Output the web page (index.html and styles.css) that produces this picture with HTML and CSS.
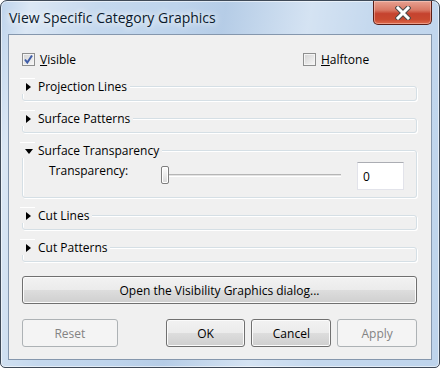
FILE: index.html
```html
<!DOCTYPE html>
<html lang="en">
  <head>
    <meta charset="utf-8" />
    <title>View Specific Category Graphics</title>
    <link rel="stylesheet" href="styles.css">
  </head>

  <body>
    <div class="window">
      <header class="titlebar">
        <span class="title">View Specific Category Graphics</span>
        <button class="close" title="Close">
          <svg width="16" height="14" viewBox="0 0 16 14" aria-hidden="true">
            <path d="M3 2 L13 12 M13 2 L3 12" stroke="#4a4a4a" stroke-width="5" stroke-linecap="square" fill="none" />
            <path d="M3 2 L13 12 M13 2 L3 12" stroke="#fff" stroke-width="3" stroke-linecap="square" fill="none" />
          </svg>
        </button>
      </header>

      <main class="client">
        <div class="checks">
          <label class="check first">
            <span class="box">
              <svg width="11" height="11" viewBox="0 0 11 11" aria-hidden="true">
                <path d="M2 5.5 L4.3 8.5 L9 1.5" stroke="#3f5da8" stroke-width="2" fill="none" />
              </svg>
            </span>
            <span><u>V</u>isible</span>
          </label>
          <label class="check">
            <span class="box"></span>
            <span><u>H</u>alftone</span>
          </label>
        </div>

        <section class="group">
          <div class="group-head"><span class="toggle"><span class="arrow"></span></span>Projection Lines</div>
        </section>

        <section class="group">
          <div class="group-head"><span class="toggle"><span class="arrow"></span></span>Surface Patterns</div>
        </section>

        <section class="group open">
          <div class="group-head"><span class="toggle"><span class="arrow down"></span></span>Surface Transparency</div>
          <div class="group-body">
            <span class="field-label">Transparency:</span>
            <div class="slider">
              <span class="track"></span>
              <span class="thumb"></span>
            </div>
            <input class="num" type="text" value="0" />
          </div>
        </section>

        <section class="group">
          <div class="group-head"><span class="toggle"><span class="arrow"></span></span>Cut Lines</div>
        </section>

        <section class="group">
          <div class="group-head"><span class="toggle"><span class="arrow"></span></span>Cut Patterns</div>
        </section>

        <button class="btn wide">Open the Visibility Graphics dialog...</button>

        <div class="actions">
          <button class="btn reset" disabled>Reset</button>
          <button class="btn ok">OK</button>
          <button class="btn">Cancel</button>
          <button class="btn" disabled>Apply</button>
        </div>
      </main>
    </div>
  </body>
</html>
```

FILE: styles.css
```css
html, body {
  margin: 0;
  padding: 0;
}

body {
  font-family: "Open Sans", "Noto Sans", sans-serif;
  font-size: 12px;
  color: #000;
}

.window {
  box-sizing: border-box;
  width: 440px;
  height: 368px;
  display: flex;
  flex-direction: column;
  border: 1px solid #3f4a58;
  border-radius: 7px 7px 5px 5px;
  box-shadow: inset 0 0 0 1px rgba(255, 255, 255, 0.55);
  background:
    linear-gradient(100deg, rgba(255,255,255,0) 0%, rgba(255,255,255,0.45) 6%, rgba(255,255,255,0.1) 20%, rgba(255,255,255,0) 35%, rgba(120,150,190,0.12) 45%, rgba(255,255,255,0.35) 62%, rgba(255,255,255,0.1) 75%, rgba(255,255,255,0) 100%),
    #bed4ec;
}

.titlebar {
  height: 33px;
  display: flex;
  align-items: flex-start;
  padding: 0 7px 0 8px;
}

.title {
  flex: 1;
  margin-top: 7px;
  font-size: 14px;
  line-height: 19px;
  color: #0b1a2c;
  text-shadow: 0 0 6px #fff, 0 0 10px rgba(255, 255, 255, 0.8);
}

.close {
  width: 59px;
  height: 24px;
  padding: 0;
  border: 1px solid #5b1e16;
  border-top: 0;
  border-radius: 0 0 5px 5px;
  display: flex;
  align-items: center;
  justify-content: center;
  background: linear-gradient(#e7a292 0%, #d87763 40%, #c5432f 55%, #c9492f 80%, #de6a4c 100%);
  box-shadow: inset 0 0 0 1px rgba(255, 220, 210, 0.45);
}

.client {
  flex: 1;
  margin: 0 7px 7px;
  border: 1px solid #8597ad;
  background: #f0f0f0;
  padding: 17px 14px 0 13px;
  display: flex;
  flex-direction: column;
}

.checks {
  display: flex;
  align-items: center;
  height: 15px;
}

.check {
  display: flex;
  align-items: center;
  gap: 5px;
}

.check.first {
  width: 281px;
}

.box {
  box-sizing: border-box;
  width: 13px;
  height: 13px;
  border: 1px solid #8e8f8f;
  box-shadow: inset 0 0 0 1px #f4f4f4;
  background: linear-gradient(135deg, #d2d2d2, #f8f8f8);
  display: flex;
  align-items: center;
  justify-content: center;
}

.group {
  box-sizing: border-box;
  height: 15px;
  margin-top: 17px;
  border: 1px solid #d5dfe5;
  border-radius: 3px;
  box-shadow: inset 1px 1px 0 #fff, 1px 1px 0 #fff;
  display: flex;
  flex-direction: column;
  align-items: flex-start;
}

.checks + .group {
  margin-top: 19px;
}

.group.open {
  height: 48px;
}

.group-head {
  display: flex;
  align-items: center;
  height: 16px;
  margin: -9px 0 0 -3px;
  padding-right: 3px;
  background: #f0f0f0;
  white-space: nowrap;
}

.toggle {
  box-sizing: border-box;
  width: 15px;
  height: 16px;
  margin-right: 3px;
  border-top: 1px solid #fff;
  display: flex;
  align-items: center;
  justify-content: center;
}

.arrow {
  width: 0;
  height: 0;
  border-top: 4px solid transparent;
  border-bottom: 4px solid transparent;
  border-left: 5px solid #000;
  margin-left: 1px;
}

.arrow.down {
  border-left: 4px solid transparent;
  border-right: 4px solid transparent;
  border-top: 5px solid #000;
  border-bottom: 0;
  margin: 2px 0 0 3px;
}

.group-body {
  align-self: stretch;
  display: flex;
  align-items: flex-start;
  margin: 4px 0 0 26px;
}

.field-label {
  width: 112px;
  margin-top: 1px;
  line-height: 16px;
}

.slider {
  position: relative;
  width: 180px;
  height: 18px;
  margin-top: 4px;
  display: flex;
  align-items: center;
}

.track {
  box-sizing: border-box;
  width: 100%;
  height: 3px;
  margin-left: 4px;
  border-top: 1px solid #b5b5b5;
  border-bottom: 1px solid #fff;
  background: #e3e3e3;
}

.thumb {
  position: absolute;
  left: 0;
  top: 0;
  box-sizing: border-box;
  width: 8px;
  height: 18px;
  border: 1px solid #7f7f7f;
  border-radius: 2px;
  background: linear-gradient(#fdfdfd 0%, #ececec 50%, #d9d9d9 100%);
  box-shadow: inset 0 0 0 1px #fff;
}

.num {
  box-sizing: border-box;
  width: 47px;
  height: 28px;
  margin-left: 16px;
  padding: 0 5px;
  border: 1px solid #e2e3ea;
  border-top-color: #abadb3;
  background: #fff;
  font: inherit;
  color: #000;
  outline: none;
}

.btn {
  box-sizing: border-box;
  height: 28px;
  padding: 0;
  border: 1px solid #707070;
  border-radius: 3px;
  background: linear-gradient(#f2f2f2 0%, #ebebeb 50%, #dddddd 51%, #cfcfcf 100%);
  box-shadow: inset 0 0 0 1px #fbfbfb;
  font: inherit;
  color: #000;
}

.btn:disabled {
  border-color: #adb2b5;
  background: #f4f4f4;
  box-shadow: none;
  color: #838383;
}

.btn.wide {
  margin-top: 14px;
}

.actions {
  display: flex;
  gap: 6px;
  margin-top: 15px;
}

.actions .btn {
  width: 80px;
}

.actions .btn.reset {
  width: 96px;
  margin-right: 42px;
}
```
